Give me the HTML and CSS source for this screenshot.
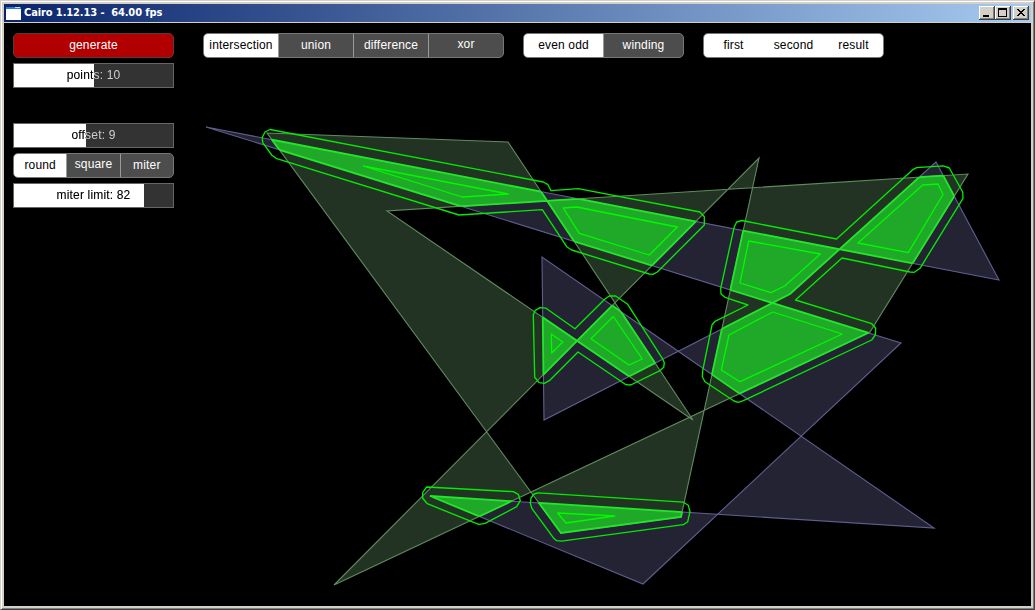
FILE: index.html
```html
<!DOCTYPE html>
<html lang="en">
<head>
<meta charset="utf-8">
<title>Cairo 1.12.13</title>
<link rel="stylesheet" href="styles.css">
</head>
<body>
<div class="window">
  <header class="titlebar">
    <svg class="app-icon" width="15" height="13" viewBox="0 0 15 13" shape-rendering="crispEdges"><rect width="15" height="13" fill="#fff"/><rect width="15" height="2" fill="#2c7ac8"/><rect x="9" width="5" height="1" fill="#bcdcf4"/></svg>
    <h1 class="title">Cairo 1.12.13 -&nbsp; 64.00 fps</h1>
    <div class="buttons">
      <button class="winbtn" aria-label="Minimize"><svg width="16" height="14" shape-rendering="crispEdges"><path d="M4 9h6v2H4z"/></svg></button>
      <button class="winbtn" aria-label="Maximize"><svg width="16" height="14" shape-rendering="crispEdges"><path fill-rule="evenodd" d="M3 2h9v9H3zM4 4v6h7V4z"/></svg></button>
      <button class="winbtn close" aria-label="Close"><svg width="16" height="14" shape-rendering="crispEdges"><path d="M4 3h2v1h1v1h2V4h1V3h2v1h-1v1h-1v1H9v1h1v1h1v1h1v1h-2V9H9V8H7v1H6v1H4V9h1V8h1V7h1V6H6V5H5V4H4z"/></svg></button>
    </div>
  </header>
  <main class="client">
    <svg class="canvas" width="1027" height="583" viewBox="4 23 1027 583">
      <defs>
        <path id="first" d="M206 127L999 280 936 162 790 294 544 420 542 257 934 528 430 496 643 584 901 343z"/>
        <path id="second" d="M267 133L508 142 693 420 387 211 968 174 870 332 334 585 759 158 681 517 561 533z"/>
        <clipPath id="in-first"><use href="#first" clip-rule="evenodd"/></clipPath>
        <clipPath id="in-second"><use href="#second" clip-rule="evenodd"/></clipPath>
      </defs>
      <use href="#first" class="shape-first"/>
      <use href="#second" class="shape-second"/>
      <g clip-path="url(#in-second)"><use href="#first" class="result"/></g>
      <g clip-path="url(#in-first)"><use href="#second" class="result-edge"/></g>
      <g class="offset-outer">
        <path d="M270 129.5L543.3 182 548 184.7 551 190.7 578.3 188.7 700 212 704.3 216.7V225L657.3 272 653 274.3 649.3 274 571.7 250 566.7 246.7 542.3 209.7 459 215 276 158.3 271.7 155 262.7 142.7 262.3 137.3 265 132z"/>
        <path d="M533.3 315L535 310.7 540 307.7 546 308.2 575 328.7 605 299 609.3 296H615.7L627.7 304.3 662.3 358.3 664.3 362.7 663.7 367.3 660 370.7 630.7 385 626 384.7 578 352 549.3 380.7 544.3 383.3 539.3 382.7 534.7 377.3z"/>
        <path d="M734.3 226.7L736.7 222 741.7 220.5 836.5 239 913.3 169.3 916.7 167.7 943.3 165.8 949.3 168 962.7 192 963 198.3 920 268.3 914.3 272.3 910 272 842 258 795.5 300 871.7 323.7 875.7 328.3 875.3 335 871.7 340 743.3 400.7 738.3 402.3 734 401 705 381.7 702.3 376.7 702.7 370.7 712 325 715 321.3 748 305 725 297.3 721 294 720.7 288.3z"/>
        <path d="M422.7 498.3V492.7L426.7 487 513.3 491.7 518.3 494.3 520.3 500.7 516.7 506.7 485 523.3 479 524.3 474.3 522.7 427.3 503.7z"/>
        <path d="M530.3 503.3L531 498 534 494 538.3 492.9 683.3 502.2 688.3 505.3 690 511.7 687.7 521.7 683.3 524.7 561.7 541.2 556.7 540.7 553.3 537.7 532 508.7z"/>
      </g>
      <g class="offset-inner">
        <path d="M363.3 166L508.3 194 462.3 197z"/>
        <path d="M563.3 208L576.7 207 677.3 227 649.3 255 579.3 233.3z"/>
        <path d="M551.3 334L562.7 342 551.7 353z"/>
        <path d="M613.3 316.5L642.3 359 629 365 591 338.7z"/>
        <path d="M748.7 241L820.3 254 784.7 286 771 292.7 740 283z"/>
        <path d="M772.7 312L842.3 334 740 381.7 721.3 370 729 335z"/>
        <path d="M922.7 185L938 184 943 194.5 908.3 252.7 858 243z"/>
        <path d="M557.7 513L614.7 516 566 523z"/>
      </g>
    </svg>
    <aside class="side">
      <button class="generate">generate</button>
      <div class="slider"><i style="width:50%"></i><span>points: 10</span></div>
      <div class="slider spaced"><i style="width:45%"></i><span>offset: 9</span></div>
      <div class="segments joins"><span class="on">round</span><span class="raised">square</span><span>miter</span></div>
      <div class="slider"><i style="width:82%"></i><span>miter limit: 82</span></div>
    </aside>
    <nav class="toolbar">
      <div class="segments ops"><span class="on">intersection</span><span>union</span><span>difference</span><span class="raised">xor</span></div>
      <div class="segments rules"><span class="on">even odd</span><span>winding</span></div>
      <div class="segments layers"><span class="on">first</span><span class="on">second</span><span class="on">result</span></div>
    </nav>
  </main>
</div>
</body>
</html>
```
FILE: styles.css
```css
* { box-sizing: border-box; }
body { margin: 0; background: #d4d0c8; overflow: hidden; }
button { font: inherit; padding: 0; margin: 0; }

.window {
  width: 1035px;
  height: 610px;
  padding: 3px;
  display: flex;
  flex-direction: column;
  background: #d4d0c8;
  border: 1px solid;
  border-color: #d4d0c8 #404040 #404040 #d4d0c8;
  box-shadow: inset 1px 1px #fff, inset -1px -1px #808080;
}
.titlebar {
  flex: none;
  height: 18px;
  margin-bottom: 1px;
  padding: 0 2px;
  display: flex;
  align-items: center;
  background: linear-gradient(90deg, #0a246a, #a6caf0);
}
.title {
  margin: 0 0 0 3px;
  flex: 1;
  color: #fff;
  font: bold 11px/18px "DejaVu Sans Condensed", "DejaVu Sans", sans-serif;
  font-stretch: condensed;
  letter-spacing: -0.1px;
}
.buttons { display: flex; }
.winbtn {
  width: 16px;
  height: 14px;
  border: 0;
  background: #d4d0c8;
  box-shadow: inset -1px -1px #404040, inset 1px 1px #fff, inset -2px -2px #808080;
}
.winbtn svg { display: block; }
.close { margin-left: 2px; }

.client {
  flex: 1;
  position: relative;
  display: flex;
  align-items: flex-start;
  gap: 29px;
  padding: 10px 9px;
  background: #000;
  font: 12px/23px "Liberation Sans", Arial, sans-serif;
  letter-spacing: 0.17px;
}
.canvas { position: absolute; inset: 0; }
.side { position: relative; width: 161px; display: flex; flex-direction: column; gap: 5px; }
.generate {
  height: 25px;
  border: 1px solid #5c3a3a;
  border-radius: 5px;
  background: #b20000;
  color: #fff;
  letter-spacing: inherit;
}
.slider {
  height: 25px;
  display: grid;
  border: 1px solid #666;
  background: #333;
  isolation: isolate;
}
.slider > * { grid-area: 1 / 1; }
.slider i { background: #fff; }
.slider span { text-align: center; color: #fff; mix-blend-mode: difference; }
.spaced { margin-top: 30px; }

.toolbar { position: relative; display: flex; gap: 19px; }
.segments {
  height: 25px;
  display: flex;
  overflow: hidden;
  border: 1px solid #777;
  border-radius: 5px;
  background: #4d4d4d;
  color: #fff;
}
.segments span { flex: 1 1 0; text-align: center; border-left: 1px solid #999; }
.segments span:first-child { border-left: 0; }
.segments .on { background: #fff; color: #000; border-color: #fff; }
.segments .raised { line-height: 21px; }
.ops { width: 301px; }
.rules { width: 161px; }
.layers { width: 181px; }

.shape-first { fill: #242333; fill-rule: evenodd; stroke: #5f5e90; stroke-width: 1.1; }
.shape-second { fill: #233323; fill-rule: evenodd; stroke: #5f8c5f; stroke-width: 1.1; }
.result { fill: #20a828; fill-rule: evenodd; stroke: #20e828; stroke-width: 1.8; }
.result-edge { fill: none; stroke: #20e828; stroke-width: 1.8; }
.offset-outer, .offset-inner { fill: none; stroke-linejoin: round; }
.offset-outer { stroke: #00ec00; stroke-width: 1.35; }
.offset-inner { stroke: #00fa00; stroke-width: 1.3; }
```
